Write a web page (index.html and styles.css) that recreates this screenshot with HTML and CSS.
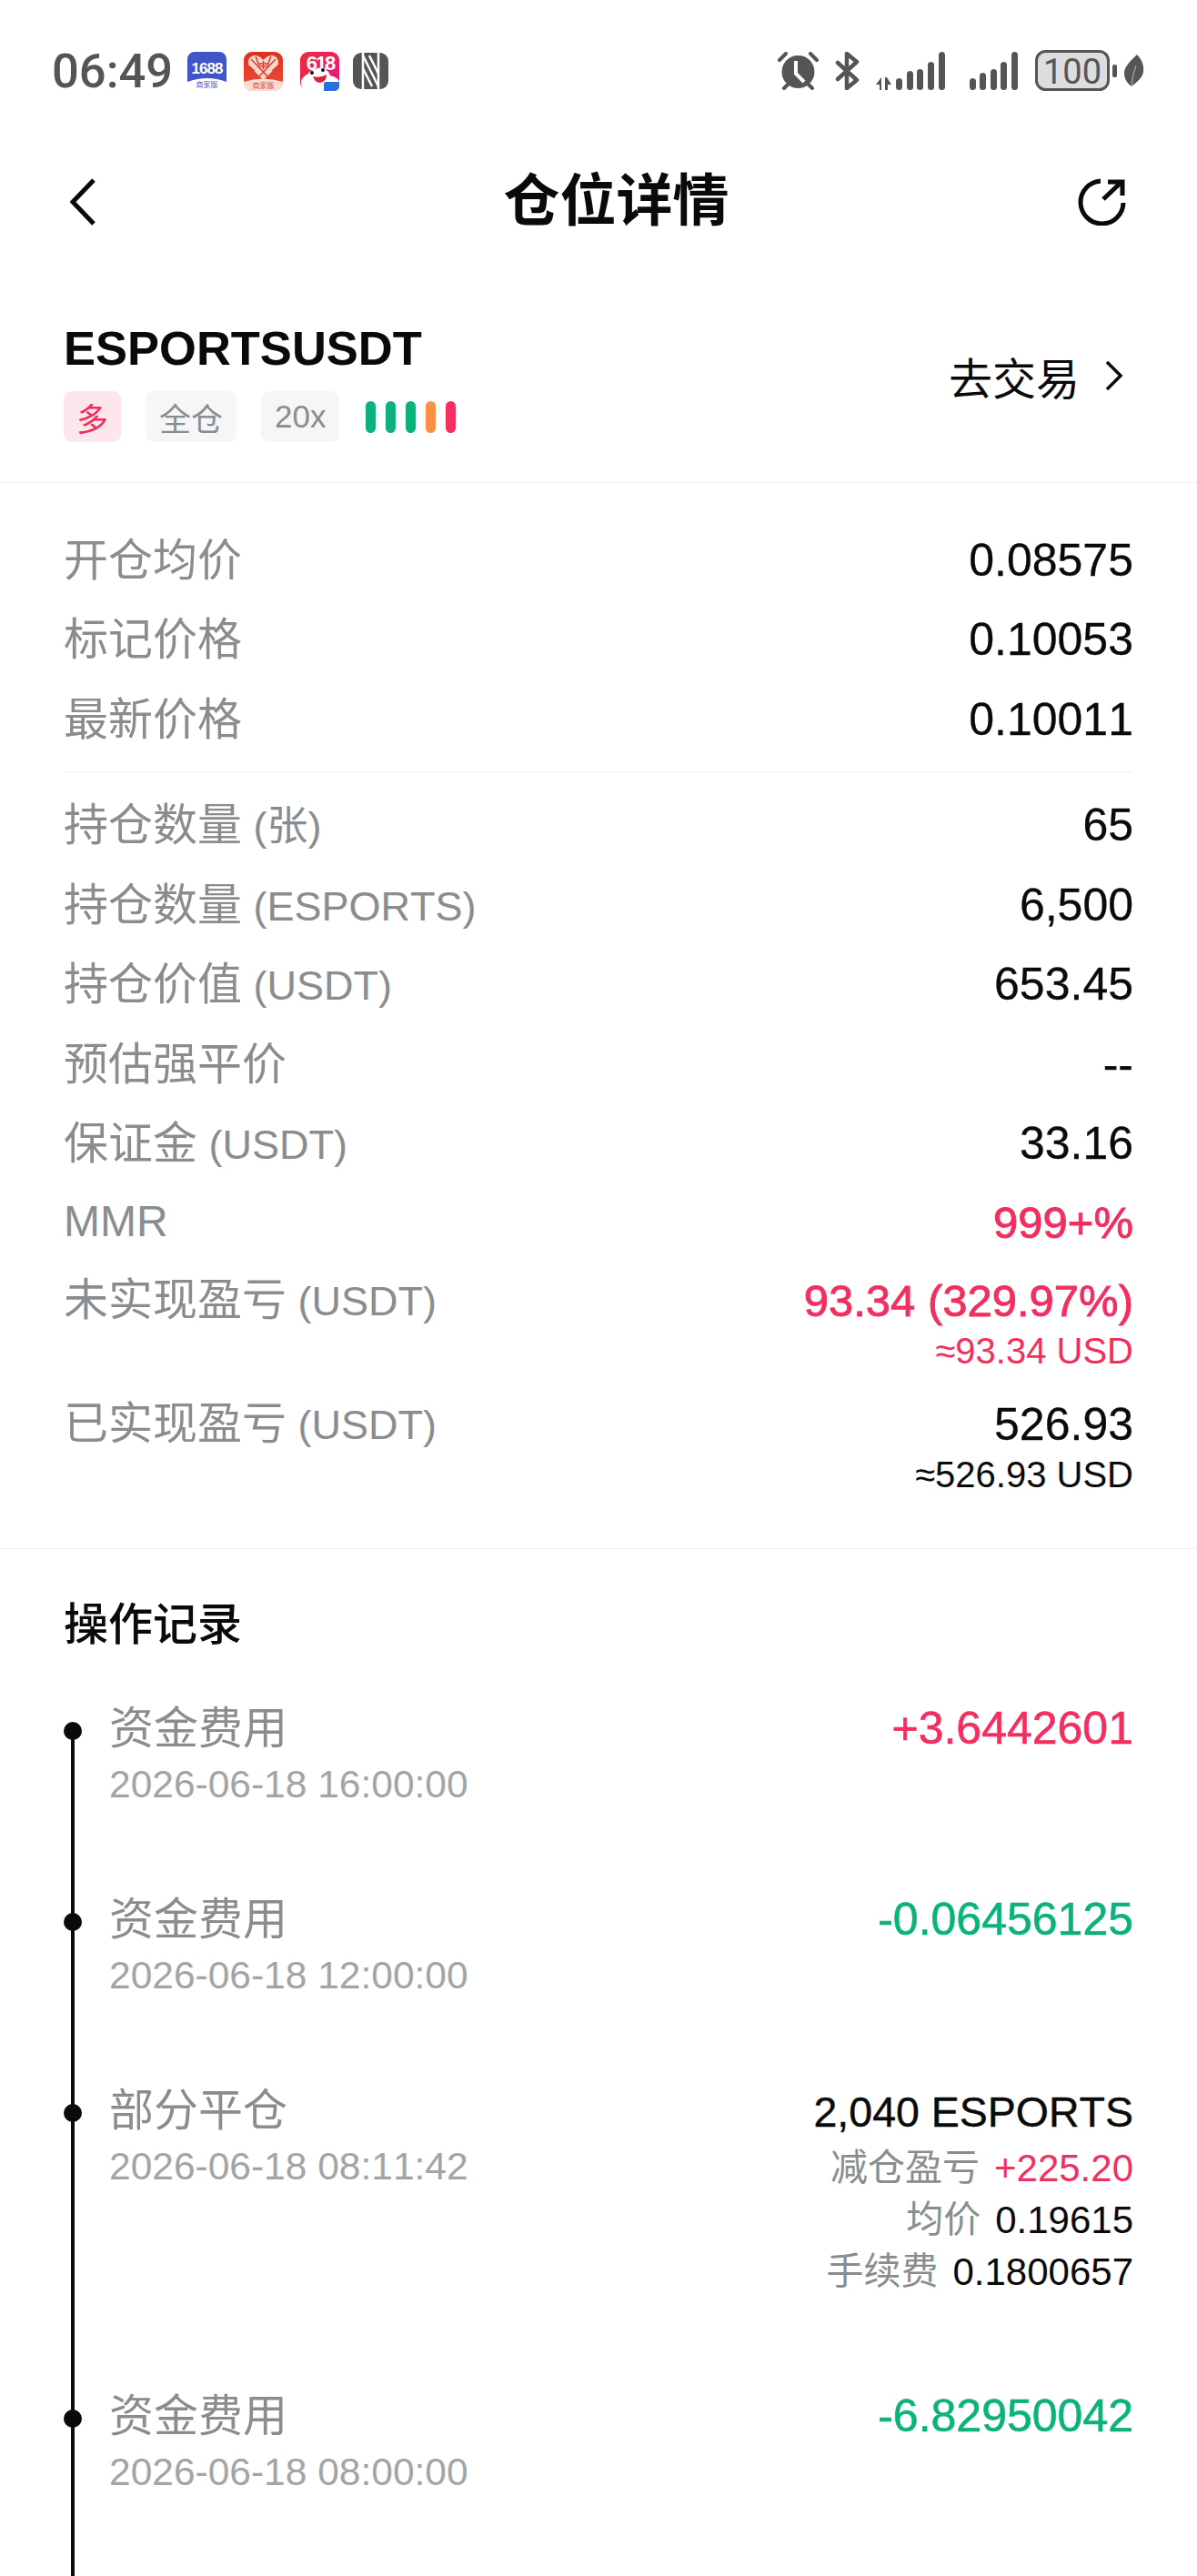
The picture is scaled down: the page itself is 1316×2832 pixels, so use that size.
FILE: index.html
```html
<!DOCTYPE html>
<html lang="zh-CN">
<head>
  <meta charset="UTF-8">
  <title>仓位详情</title>
  <link rel="stylesheet" href="styles.css">
</head>
<body>
  <div class="page">
    <div class="statusbar">
      <span class="time">06:49</span>
      <svg class="app" width="43" height="42" viewBox="0 0 43 42">
        <path d="M8 0h27a8 8 0 0 1 8 8v25q-21-8-43 0V8a8 8 0 0 1 8-8z" fill="#3f55c8"/>
        <text x="21.500" y="24" class="app-num">1688</text>
        <text x="21.500" y="39" class="app-tiny tiny-blue">商家版</text>
      </svg>
      <svg class="app" width="43" height="43" viewBox="0 0 43 43">
        <defs><linearGradient id="pddBg" x1="0" y1="0" x2="0" y2="1"><stop offset="0" stop-color="#e1301c"/><stop offset=".7" stop-color="#e8452f"/><stop offset="1" stop-color="#f7b7a8"/></linearGradient></defs>
        <rect width="43" height="43" rx="9" fill="url(#pddBg)"/>
        <path d="M21.500 31 6 16C3 9 7 4 12 4c4 0 7 2 9.500 5 2.500-3 5.500-5 9.500-5 5 0 9 5 6 12z" fill="#f8d8cc"/>
        <path d="M8 8l20 21M35 8 15 29M5 15l7 6M38 15l-7 6M13 5l4 10M30 5l-4 10" stroke="#d9402c" stroke-width="1.600" fill="none"/>
        <path d="M21.500 10v9M17 13h9M17 16h9" stroke="#d9402c" stroke-width="1.600" fill="none"/>
        <path d="M0 33q21-7 43 0v2a8 8 0 0 1-8 8H8a8 8 0 0 1-8-8z" fill="#fbdcd4"/>
        <text x="21.500" y="40" class="app-tiny tiny-red">商家版</text>
      </svg>
      <svg class="app" width="43" height="43" viewBox="0 0 43 43">
        <defs><linearGradient id="jdBg" x1="0" y1="0" x2="1" y2="1"><stop offset="0" stop-color="#ee2b35"/><stop offset="1" stop-color="#e8168c"/></linearGradient></defs>
        <rect width="43" height="43" rx="9" fill="url(#jdBg)"/>
        <text x="22" y="20" class="app-618">618</text>
        <path d="M1 34c0-5 4-8 8-10 2-5 16-7 21-3 2 2 2 3 3 5 4 1 9 3 10 7v4a6 6 0 0 1-6 6H8c-5 0-7-4-7-9z" fill="#fff"/>
        <path d="M14 27q8 2 15-2 0 8-7 9-6 0-8-7z" fill="#e0203a"/>
        <circle cx="13" cy="23" r="2" fill="#111"/><circle cx="25" cy="20" r="2" fill="#111"/>
        <path d="M26 35a2 2 0 0 1 2-2h15v5a5 5 0 0 1-5 5H26z" fill="#2a6fdc"/>
      </svg>
      <svg class="nfc" width="39" height="40" viewBox="0 0 39 40">
        <rect width="39" height="40" rx="9" fill="#555"/>
        <path d="M11 0v40M28 0v40" stroke="#fff" stroke-width="2.500" fill="none"/>
        <path d="M11 3l17 34M18 3l10 20M11 17l10 20" stroke="#fff" stroke-width="2.500" fill="none"/>
      </svg>
      <span class="status-spacer"></span>
      <svg class="sico" width="45" height="42" viewBox="0 0 45 42">
        <path d="M2 9 9 2M36 2l7 7M7 40l4-4M38 40l-4-4" stroke="#555" stroke-width="4" stroke-linecap="round"/>
        <circle cx="22.500" cy="22" r="18" fill="#555"/>
        <path d="M20 10v14l9 9" stroke="#fff" stroke-width="4" fill="none"/>
      </svg>
      <svg class="sico" width="27" height="42" viewBox="0 0 27 42">
        <path d="M3 12 24 31 13 40V2l11 9-21 19" stroke="#555" stroke-width="4.500" fill="none" stroke-linejoin="round" stroke-linecap="round"/>
      </svg>
      <svg class="sico" width="76" height="42" viewBox="0 0 76 42">
        <path d="M0 36l6-8v14H4v-6zM10 42V28h2l5 8h-4v6z" fill="#555"/>
        <rect x="22" y="29" width="7" height="13" rx="3.500" fill="#555"/>
        <rect x="34" y="21" width="7" height="21" rx="3.500" fill="#555"/>
        <rect x="45" y="19" width="7" height="23" rx="3.500" fill="#555"/>
        <rect x="57" y="11" width="7" height="31" rx="3.500" fill="#555"/>
        <rect x="69" y="0" width="7" height="42" rx="3.500" fill="#555"/>
      </svg>
      <svg class="sico sig2" width="53" height="42" viewBox="0 0 53 42">
        <rect x="0" y="29" width="7" height="13" rx="3.500" fill="#555"/>
        <rect x="11" y="23" width="7" height="19" rx="3.500" fill="#555"/>
        <rect x="23" y="19" width="7" height="23" rx="3.500" fill="#555"/>
        <rect x="34" y="11" width="7" height="31" rx="3.500" fill="#555"/>
        <rect x="46" y="0" width="7" height="42" rx="3.500" fill="#555"/>
      </svg>
      <svg class="sico batt" width="90" height="50" viewBox="0 0 90 50">
        <rect x="1.500" y="1.500" width="79" height="42" rx="10" fill="#ddd" stroke="#555" stroke-width="3"/>
        <rect x="85" y="16" width="5" height="14" rx="2" fill="#555"/>
        <text x="41" y="37" class="batt-num">100</text>
      </svg>
      <svg class="leaf" width="22" height="36" viewBox="0 0 22 36">
        <path d="M14 0C20 6 22 13 21 19 20 26 14 30 8 35 2 30 0 26 0 20 0 13 8 6 14 0z" fill="#555"/>
        <path d="M8 35Q9 22 13 12" stroke="#bbb" stroke-width="1" fill="none"/>
      </svg>
    </div>

    <div class="nav">
      <svg class="nav-back" width="28" height="52" viewBox="0 0 28 52">
        <path d="M26 2 3 26l23 24" stroke="#0a0a0a" stroke-width="5" fill="none"/>
      </svg>
      <h1 class="nav-title">仓位详情</h1>
      <svg class="nav-share" width="54" height="52" viewBox="0 0 54 52">
        <path d="M26 3A23.500 23.500 0 1 0 51 27" stroke="#0a0a0a" stroke-width="5" fill="none"/>
        <path d="M29 23 49 4M34 4h16v15" stroke="#0a0a0a" stroke-width="5" fill="none"/>
      </svg>
    </div>

    <div class="symbol">
      <div>
        <div class="symbol-name">ESPORTSUSDT</div>
        <div class="tags">
          <span class="tag tag-long">多</span>
          <span class="tag">全仓</span>
          <span class="tag">20x</span>
          <span class="risk">
            <i class="risk-bar green"></i><i class="risk-bar green"></i><i class="risk-bar green"></i><i class="risk-bar orange"></i><i class="risk-bar red"></i>
          </span>
        </div>
      </div>
      <div class="goto">
        <span>去交易</span>
        <svg width="22" height="34" viewBox="0 0 22 34"><path d="M3 2l15 15L3 32" stroke="#0a0a0a" stroke-width="3.500" fill="none"/></svg>
      </div>
    </div>

    <div class="info">
      <div class="group group-first">
        <div class="row"><span class="label">开仓均价</span><span class="value">0.08575</span></div>
        <div class="row"><span class="label">标记价格</span><span class="value">0.10053</span></div>
        <div class="row"><span class="label">最新价格</span><span class="value">0.10011</span></div>
      </div>
      <div class="group">
        <div class="row"><span class="label">持仓数量<span class="unit"> (张)</span></span><span class="value">65</span></div>
        <div class="row"><span class="label">持仓数量<span class="unit"> (ESPORTS)</span></span><span class="value">6,500</span></div>
        <div class="row"><span class="label">持仓价值<span class="unit"> (USDT)</span></span><span class="value">653.45</span></div>
        <div class="row"><span class="label">预估强平价</span><span class="value">--</span></div>
        <div class="row"><span class="label">保证金<span class="unit"> (USDT)</span></span><span class="value">33.16</span></div>
        <div class="row"><span class="label label-latin">MMR</span><span class="value up strong">999+%</span></div>
        <div class="row row-pnl">
          <span class="label">未实现盈亏<span class="unit"> (USDT)</span></span>
          <div class="value-stack up"><div class="value strong">93.34 (329.97%)</div><div class="approx">≈93.34 USD</div></div>
        </div>
        <div class="row row-pnl">
          <span class="label">已实现盈亏<span class="unit"> (USDT)</span></span>
          <div class="value-stack"><div class="value">526.93</div><div class="approx">≈526.93 USD</div></div>
        </div>
      </div>
    </div>

    <div class="records">
      <h2 class="records-title">操作记录</h2>
      <div class="timeline">
        <div class="item item-s">
          <div><div class="item-name">资金费用</div><div class="item-date">2026-06-18 16:00:00</div></div>
          <div class="item-amount up">+3.6442601</div>
        </div>
        <div class="item item-s">
          <div><div class="item-name">资金费用</div><div class="item-date">2026-06-18 12:00:00</div></div>
          <div class="item-amount down">-0.06456125</div>
        </div>
        <div class="item item-l">
          <div><div class="item-name">部分平仓</div><div class="item-date">2026-06-18 08:11:42</div></div>
          <div>
            <div class="item-amount amount-sm">2,040 ESPORTS</div>
            <div class="detail"><span class="detail-label">减仓盈亏</span><span class="up">+225.20</span></div>
            <div class="detail"><span class="detail-label">均价</span><span>0.19615</span></div>
            <div class="detail"><span class="detail-label">手续费</span><span>0.1800657</span></div>
          </div>
        </div>
        <div class="item item-s">
          <div><div class="item-name">资金费用</div><div class="item-date">2026-06-18 08:00:00</div></div>
          <div class="item-amount down">-6.82950042</div>
        </div>
      </div>
    </div>
  </div>
</body>
</html>
```

FILE: styles.css
```css
html, body {
  margin: 0;
  padding: 0;
  background: #fff;
}
body {
  font-family: "Liberation Sans", "Noto Sans CJK SC", sans-serif;
  font-kerning: none;
  color: #0a0a0a;
}
.page {
  width: 1316px;
  height: 2832px;
  overflow: hidden;
}

/* status bar */
.statusbar {
  display: flex;
  align-items: flex-start;
  height: 120px;
  padding: 57px 58px 0 57px;
  box-sizing: border-box;
}
.time {
  font-family: Roboto, sans-serif;
  font-size: 52.5px;
  font-weight: 500;
  line-height: 42px;
  color: #555;
  width: 149px;
}
.app { margin-right: 19px; }
.nfc { margin: 1px 0 0 -4px; }
.status-spacer { flex: 1; }
.sico { margin-right: 18px; }
.sig2 { margin-left: 9px; margin-right: 19px; }
.batt { margin-top: -2px; margin-right: 8px; }
.leaf { margin-top: 3px; }
.app-num {
  font-size: 17px;
  font-weight: 700;
  letter-spacing: -1px;
  fill: #fff;
  text-anchor: middle;
}
.app-618 {
  font-size: 22px;
  font-weight: 700;
  letter-spacing: -2px;
  fill: #fff;
  text-anchor: middle;
}
.app-tiny {
  font-size: 8px;
  text-anchor: middle;
}
.tiny-blue { fill: #4a5ab8; }
.tiny-red { fill: #c0503f; }
.batt-num {
  font-family: Roboto, sans-serif;
  font-size: 38px;
  fill: #555;
  text-anchor: middle;
}

/* nav */
.nav {
  display: flex;
  align-items: center;
  justify-content: space-between;
  height: 204px;
  padding: 0 78px 0 77px;
}
.nav-title {
  margin: 0 0 0 66px;
  font-size: 62px;
  font-weight: 700;
  line-height: 80px;
}

/* symbol header */
.symbol {
  display: flex;
  align-items: center;
  justify-content: space-between;
  padding: 29px 70px 44px;
  border-bottom: 1px solid #eeeeee;
}
.symbol-name {
  font-size: 52.5px;
  font-weight: 700;
  line-height: 60px;
}
.tags {
  display: flex;
  align-items: center;
  margin-top: 17px;
  height: 56px;
}
.tag {
  display: flex;
  align-items: center;
  justify-content: center;
  height: 56px;
  padding: 0 15px;
  margin-right: 27px;
  border-radius: 9px;
  background: #f6f6f6;
  color: #8a8d90;
  font-size: 35px;
}
.tag-long {
  padding: 0 14px;
  background: #fde6ec;
  color: #ef2f5f;
}
.risk {
  display: flex;
  gap: 11px;
  margin-left: 2px;
}
.risk-bar {
  display: block;
  width: 11px;
  height: 35px;
  border-radius: 5.5px;
}
.green { background: #0cb27c; }
.orange { background: #fb8f43; }
.red { background: #f52f5f; }
.goto {
  display: flex;
  align-items: center;
  gap: 27px;
  margin: -14px 10px 0 0;
  font-size: 48px;
}

/* info rows */
.info {
  padding: 40px 70px 42px;
  border-bottom: 1px solid #eeeeee;
}
.group-first {
  padding-bottom: 14px;
  margin-bottom: 14px;
  border-bottom: 1px solid #eeeeee;
}
.row {
  display: flex;
  align-items: center;
  justify-content: space-between;
  height: 87.5px;
}
.label {
  color: #8a8d90;
  font-size: 49px;
  padding-bottom: 7px;
}
.label-latin {
  font-size: 48px;
  padding-bottom: 2px;
}
.unit { font-size: 45px; }
.value {
  font-size: 50px;
  padding-top: 2px;
  -webkit-text-stroke: 0.3px;
}
.strong {
  font-size: 49px;
  padding-top: 0;
  -webkit-text-stroke: 0.9px;
}
.up { color: #f22f5f; }
.down { color: #0cb27c; }
.row-pnl {
  align-items: flex-start;
  height: auto;
  padding: 14px 0 15px;
  line-height: 60px;
}
.row-pnl .label { margin-top: -3px; padding-bottom: 0; }
.row-pnl .value { padding-top: 0; margin-top: -2px; }
.value-stack { text-align: right; }
.approx {
  font-size: 40px;
  line-height: 48px;
  margin-top: 1px;
}

/* operation records */
.records-title {
  margin: 0;
  padding: 53px 70px 0;
  font-size: 49px;
  font-weight: 500;
  line-height: 60px;
}
.timeline {
  margin-top: 54px;
}
.item {
  position: relative;
  display: flex;
  justify-content: space-between;
  padding: 0 70px 0 120px;
}
.item-s { height: 210px; }
.item-l { height: 336px; }
.item::before {
  content: "";
  position: absolute;
  left: 78px;
  top: 0;
  bottom: 0;
  width: 4px;
  background: #0a0a0a;
}
.item::after {
  content: "";
  position: absolute;
  left: 70px;
  top: 23px;
  width: 20px;
  height: 20px;
  border-radius: 50%;
  background: #0a0a0a;
}
.item:first-child::before { top: 30px; }
.item:last-child { height: 400px; }
.item-name {
  color: #8a8d90;
  font-size: 49px;
  line-height: 60px;
}
.item-date {
  color: #a2a5a8;
  font-size: 42.5px;
  line-height: 50px;
  margin-top: 7px;
}
.item-amount {
  font-size: 50px;
  line-height: 60px;
  text-align: right;
  -webkit-text-stroke: 0.6px;
}
.amount-sm {
  font-size: 46.5px;
  line-height: 65px;
  -webkit-text-stroke: 0.4px;
}
.detail {
  display: flex;
  justify-content: flex-end;
  gap: 16px;
  font-size: 42px;
  line-height: 57px;
}
.detail-label {
  color: #8a8d90;
  font-size: 41px;
}
```
